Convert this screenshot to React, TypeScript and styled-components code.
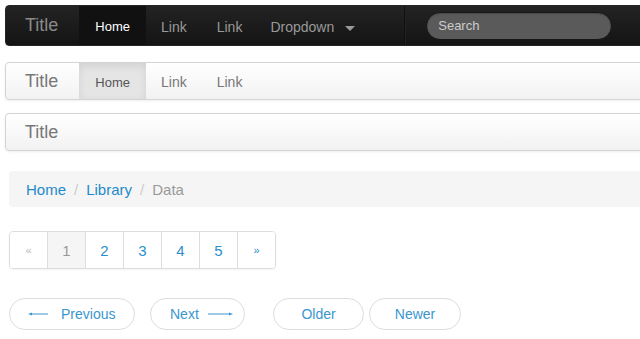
import styled, { createGlobalStyle } from 'styled-components';

const GlobalStyle = createGlobalStyle`
  html, body {
    margin: 0;
    padding: 0;
    background: #ffffff;
    overflow: hidden;
    font-family: "Liberation Sans", Arial, Helvetica, sans-serif;
  }
`;

const Page = styled.div`
  width: 640px;
  height: 339px;
  padding-top: 5px;
  box-sizing: border-box;
  overflow: hidden;
`;

const Navbar = styled.div<{ $dark?: boolean }>`
  display: flex;
  align-items: stretch;
  margin-left: 5px;
  width: 700px;
  box-sizing: border-box;
  border-radius: 4px;
  height: ${(p) => (p.$dark ? '41px' : '38px')};
  border: 1px solid ${(p) => (p.$dark ? '#252525' : '#d4d4d4')};
  background: ${(p) =>
    p.$dark
      ? 'linear-gradient(to bottom, #232323, #141414)'
      : 'linear-gradient(to bottom, #ffffff, #f2f2f2)'};
  box-shadow: ${(p) => (p.$dark ? 'none' : '0 1px 3px rgba(0,0,0,0.07)')};
`;

const Brand = styled.div<{ $dark?: boolean }>`
  display: flex;
  align-items: center;
  padding: 0 21px 0 19px;
  font-size: 18px;
  color: ${(p) => (p.$dark ? '#8a8a8a' : '#777777')};
`;

const NavItem = styled.div<{ $dark?: boolean; $active?: boolean; $tight?: boolean }>`
  display: flex;
  align-items: center;
  padding: 2px ${(p) => (p.$active ? '16px' : '15px')} 0;
  padding-left: ${(p) => (p.$tight ? '13px' : undefined)};
  font-size: ${(p) => (p.$active ? '13px' : '14px')};
  color: ${(p) =>
    p.$active ? (p.$dark ? '#ffffff' : '#555555') : p.$dark ? '#999999' : '#777777'};
  background: ${(p) =>
    p.$active ? (p.$dark ? '#111111' : '#e5e5e5') : 'transparent'};
  box-shadow: ${(p) =>
    p.$active && !p.$dark ? 'inset 0 3px 8px rgba(0,0,0,0.09)' : 'none'};
`;

const Caret = styled.span`
  display: inline-block;
  margin-left: 11px;
  margin-top: 3px;
  width: 0;
  height: 0;
  border-left: 5px solid transparent;
  border-right: 5px solid transparent;
  border-top: 5px solid #999999;
`;

const Divider = styled.div`
  width: 1px;
  margin-left: 34px;
  background: #111111;
  border-right: 1px solid #222222;
`;

const SearchWrap = styled.div`
  display: flex;
  align-items: center;
  padding-left: 20px;
`;

const Search = styled.input`
  width: 186px;
  height: 28px;
  box-sizing: border-box;
  border-radius: 14px;
  border: 1px solid #151515;
  background: #5a5a5a;
  box-shadow: inset 0 1px 2px rgba(0,0,0,0.2);
  padding: 0 11px;
  font-family: "Liberation Sans", Arial, sans-serif;
  font-size: 13px;
  color: #cccccc;
  outline: none;
  &::placeholder {
    color: #cccccc;
  }
`;

const Breadcrumb = styled.div`
  display: flex;
  align-items: center;
  margin: 20px 0 0 9px;
  width: 700px;
  height: 36px;
  padding: 0 17px;
  box-sizing: border-box;
  border-radius: 4px;
  background: #f5f5f5;
  font-size: 15px;
`;

const Crumb = styled.span<{ $active?: boolean }>`
  color: ${(p) => (p.$active ? '#999999' : '#1f8acb')};
`;

const Sep = styled.span`
  color: #cccccc;
  padding: 0 8px;
`;

const Pagination = styled.div`
  display: inline-flex;
  margin: 24px 0 0 9px;
  border: 1px solid #dddddd;
  border-radius: 4px;
  overflow: hidden;
  box-shadow: 0 1px 2px rgba(0,0,0,0.05);
`;

const PageCell = styled.div<{ $active?: boolean; $muted?: boolean; $small?: boolean }>`
  width: 38px;
  height: 36px;
  display: flex;
  align-items: center;
  justify-content: center;
  box-sizing: border-box;
  border-left: 1px solid #dddddd;
  &:first-child {
    border-left: none;
    width: 37px;
  }
  font-size: ${(p) => (p.$small ? '11px' : '15px')};
  background: ${(p) => (p.$active ? '#f5f5f5' : '#ffffff')};
  color: ${(p) => (p.$active ? '#999999' : p.$muted ? '#bbbbbb' : '#2a8fcc')};
`;

const Pager = styled.div`
  display: flex;
  margin: 29px 0 0 9px;
`;

const PagerButton = styled.div<{ $width: number; $gap: number; $pad?: number; $inner?: number }>`
  width: ${(p) => p.$width}px;
  margin-right: ${(p) => p.$gap}px;
  height: 32px;
  box-sizing: border-box;
  border: 1px solid #dddddd;
  border-radius: 16px;
  display: flex;
  align-items: center;
  justify-content: ${(p) => (p.$pad !== undefined ? 'flex-start' : 'center')};
  padding-left: ${(p) => p.$pad ?? 0}px;
  gap: ${(p) => p.$inner ?? 12}px;
  font-size: 14px;
  color: #3a96cf;
`;

const Arrow = ({ dir, width }: { dir: 'left' | 'right'; width: number }) => (
  <svg width={width} height="6" viewBox={`0 0 ${width} 6`}>
    {dir === 'left' ? (
      <>
        <line x1="3" y1="3" x2={width} y2="3" stroke="#3a96cf" strokeWidth="1" />
        <polygon points="0,3 4,1.5 4,4.5" fill="#3a96cf" />
      </>
    ) : (
      <>
        <line x1="0" y1="3" x2={width - 3} y2="3" stroke="#3a96cf" strokeWidth="1" />
        <polygon points={`${width},3 ${width - 4},1.5 ${width - 4},4.5`} fill="#3a96cf" />
      </>
    )}
  </svg>
);

export default function App() {
  return (
    <Page>
      <GlobalStyle />
      <Navbar $dark>
        <Brand $dark>Title</Brand>
        <NavItem $dark $active>Home</NavItem>
        <NavItem $dark>Link</NavItem>
        <NavItem $dark>Link</NavItem>
        <NavItem $dark $tight>
          Dropdown
          <Caret />
        </NavItem>
        <Divider />
        <SearchWrap>
          <Search placeholder="Search" />
        </SearchWrap>
      </Navbar>

      <Navbar style={{ marginTop: 16 }}>
        <Brand>Title</Brand>
        <NavItem $active>Home</NavItem>
        <NavItem>Link</NavItem>
        <NavItem>Link</NavItem>
      </Navbar>

      <Navbar style={{ marginTop: 13 }}>
        <Brand>Title</Brand>
      </Navbar>

      <Breadcrumb>
        <Crumb>Home</Crumb>
        <Sep>/</Sep>
        <Crumb>Library</Crumb>
        <Sep>/</Sep>
        <Crumb $active>Data</Crumb>
      </Breadcrumb>

      <Pagination>
        <PageCell $muted $small>«</PageCell>
        <PageCell $active>1</PageCell>
        <PageCell>2</PageCell>
        <PageCell>3</PageCell>
        <PageCell>4</PageCell>
        <PageCell>5</PageCell>
        <PageCell $small>»</PageCell>
      </Pagination>

      <Pager>
        <PagerButton $width={126} $gap={15} $pad={18} $inner={13}>
          <Arrow dir="left" width={20} />
          Previous
        </PagerButton>
        <PagerButton $width={95} $gap={28} $pad={19} $inner={9}>
          Next
          <Arrow dir="right" width={25} />
        </PagerButton>
        <PagerButton $width={91} $gap={5}>Older</PagerButton>
        <PagerButton $width={92} $gap={0}>Newer</PagerButton>
      </Pager>
    </Page>
  );
}
